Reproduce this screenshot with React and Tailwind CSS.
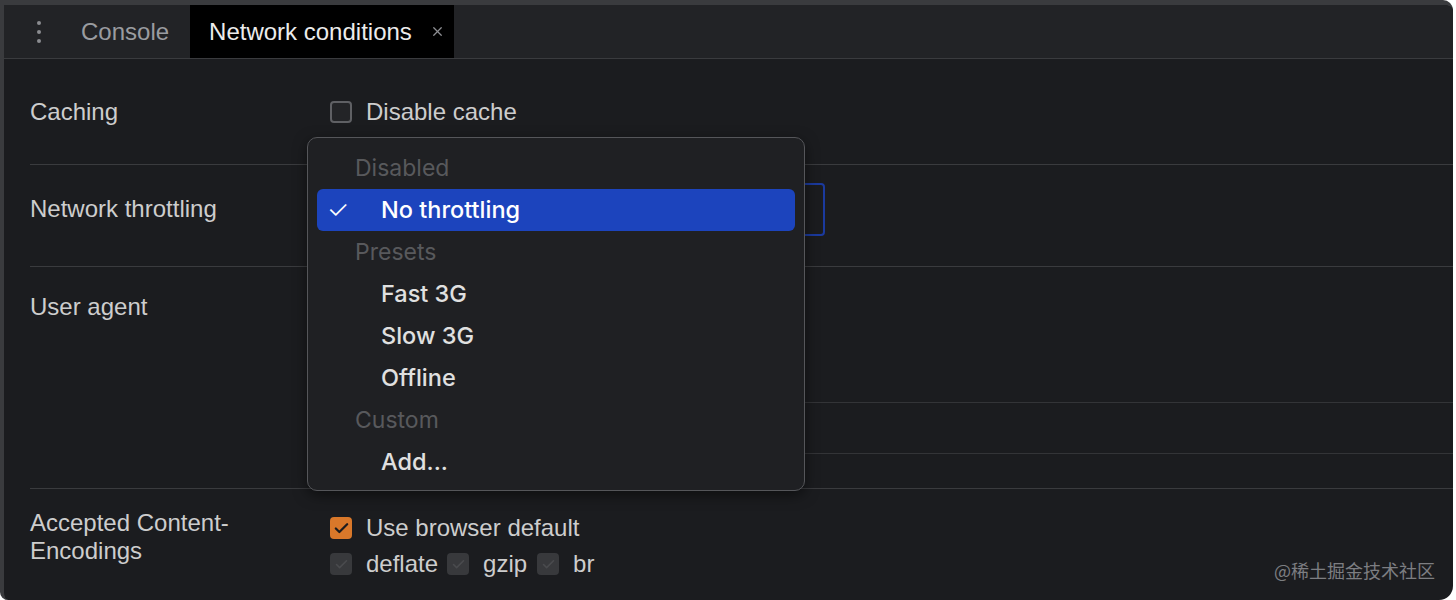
import { Check, X } from "lucide-react";

const sans = { fontFamily: '"Liberation Sans", Arial, sans-serif' };
const menuFont = { fontFamily: 'Inter, "Noto Sans", sans-serif' };

function Box({ variant = "empty" }) {
  if (variant === "checked") {
    return (
      <span className="flex h-[22px] w-[22px] items-center justify-center rounded-[4px] bg-[#d9782a]">
        <Check size={17} strokeWidth={3.2} className="text-[#1b1c1f]" />
      </span>
    );
  }
  if (variant === "disabled") {
    return (
      <span className="flex h-[22px] w-[22px] items-center justify-center rounded-[4px] bg-[#38393c]">
        <Check size={15} strokeWidth={2.5} className="text-[#4a4b4e]" />
      </span>
    );
  }
  return <span className="h-[22px] w-[22px] rounded-[4px] border-2 border-[#5f6064] bg-[#232427]" />;
}

const menu = [
  { label: "Disabled", header: true },
  { label: "No throttling", selected: true },
  { label: "Presets", header: true },
  { label: "Fast 3G" },
  { label: "Slow 3G" },
  { label: "Offline" },
  { label: "Custom", header: true },
  { label: "Add..." },
];

function ThrottleMenu() {
  return (
    <div
      className="absolute left-[303px] top-[132px] w-[498px] h-[354px] rounded-[10px] border border-[#55565a] bg-[#1f2023] px-[9px] pt-[9px] shadow-[0_4px_14px_rgba(0,0,0,0.5)]"
      style={menuFont}
    >
      {menu.map((m) =>
        m.header ? (
          <div key={m.label} className="h-[42px] pl-[38px] text-[23px] leading-[42px] text-[#58595c]">
            {m.label}
          </div>
        ) : (
          <div
            key={m.label}
            className={
              "flex h-[42px] items-center rounded-[6px] text-[23.5px] font-medium " +
              (m.selected ? "bg-[#1c44bd] text-white" : "text-[#e0e0e0]")
            }
          >
            <span className="flex w-[64px] pl-[10px]">
              {m.selected && <span className="text-[25px] font-light">✓</span>}
            </span>
            {m.label}
          </div>
        )
      )}
    </div>
  );
}

export default function App() {
  return (
    <div className="h-[600px] w-[1456px] bg-white" style={sans}>
      <div className="relative flex h-[600px] w-[1453px] flex-col overflow-hidden rounded-tr-[10px] rounded-br-[14px] rounded-bl-[8px] border-l-4 border-t-[5px] border-[#3a3b3e] bg-[#1b1c1f]">
        <div className="flex h-[54px] items-stretch border-b border-[#3a3b3e] bg-[#222326]">
          <div className="flex w-[72px] flex-col items-center justify-center gap-[5px] pr-[2px]">
            <span className="h-[4px] w-[4px] rounded-full bg-[#8b8c90]" />
            <span className="h-[4px] w-[4px] rounded-full bg-[#8b8c90]" />
            <span className="h-[4px] w-[4px] rounded-full bg-[#8b8c90]" />
          </div>
          <div className="flex items-center pl-[5px] pr-[21px] text-[24px] text-[#9a9ca0]">Console</div>
          <div className="flex items-center bg-black pl-[19px] pr-[9px] text-[24px] text-[#ececec]">
            Network conditions
            <X size={15} strokeWidth={2} className="ml-[18px] text-[#8e8f93]" />
          </div>
        </div>

        <div className="flex flex-1 flex-col pl-[26px] text-[24px] text-[#cdcdcd]">
          <div className="flex h-[106px] items-center border-b border-[#3a3b3e]">
            <div className="w-[300px] pt-[1px]">Caching</div>
            <div className="flex items-center gap-[14px] pt-[1px]">
              <Box />
              <span>Disable cache</span>
            </div>
          </div>

          <div className="flex h-[102px] border-b border-[#3a3b3e]">
            <div className="w-[300px] pt-[30px] leading-[28px]">Network throttling</div>
            <div className="pt-[18px]">
              <div className="h-[53px] w-[495px] rounded-[4px] border-2 border-[#1b3a9e]" />
            </div>
          </div>

          <div className="flex h-[222px] border-b border-[#3a3b3e]">
            <div className="w-[300px] pt-[26px] leading-[28px]">User agent</div>
            <div className="flex flex-1 flex-col pt-[135px]">
              <div className="h-[51px] border-t border-[#333437]" />
              <div className="border-t border-[#333437]" />
            </div>
          </div>

          <div className="flex pt-[20px]">
            <div className="w-[300px] leading-[28px]">
              Accepted Content-
              <br />
              Encodings
            </div>
            <div className="flex flex-col gap-[12px] pt-[7px]">
              <div className="flex items-center gap-[14px]">
                <Box variant="checked" />
                <span className="leading-[24px]">Use browser default</span>
              </div>
              <div className="flex items-center leading-[24px]">
                <Box variant="disabled" />
                <span className="ml-[14px] mr-[9px]">deflate</span>
                <Box variant="disabled" />
                <span className="ml-[14px] mr-[10px]">gzip</span>
                <Box variant="disabled" />
                <span className="ml-[14px]">br</span>
              </div>
            </div>
          </div>
        </div>

        <div
          className="absolute bottom-[16px] right-[18px] text-[18px] text-[#7d7e82]"
          style={{ fontFamily: '"Noto Sans CJK SC", "Noto Sans", sans-serif' }}
        >
          @稀土掘金技术社区
        </div>

        <ThrottleMenu />
      </div>
    </div>
  );
}
